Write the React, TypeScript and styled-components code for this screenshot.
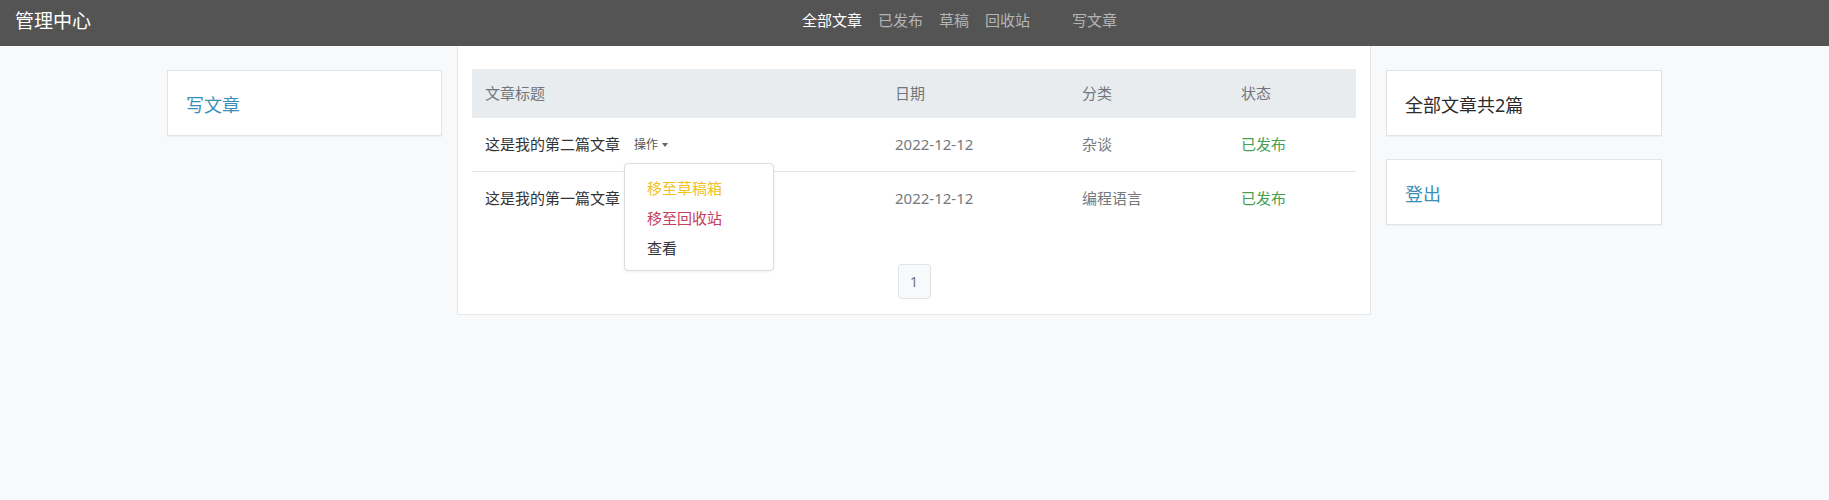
import React from "react";
import styled, { createGlobalStyle } from "styled-components";

const Global = createGlobalStyle`
  html, body { margin: 0; padding: 0; }
  body {
    background: #f8f9fa;
    font-family: "Noto Sans", "Noto Sans CJK SC", sans-serif;
    color: #212529;
  }
`;

const NavBar = styled.header`
  height: 46px;
  background: #545454;
  display: flex;
  align-items: center;
  padding-left: 15px;
  box-sizing: border-box;
`;

const Brand = styled.div`
  width: 779px;
  color: #fff;
  font-size: 19px;
  line-height: 26px;
  margin-top: -4px;
  flex-shrink: 0;
`;

const NavGroup = styled.nav<{ $offset?: number }>`
  display: flex;
  margin-left: ${(p) => p.$offset ?? 0}px;
  margin-top: -6px;
`;

const NavLink = styled.a<{ $active?: boolean }>`
  padding: 0 8px;
  font-size: 15px;
  line-height: 22px;
  color: ${(p) => (p.$active ? "#ffffff" : "#b4b4b4")};
  text-decoration: none;
`;

const Layout = styled.main`
  display: grid;
  grid-template-columns: 275px 914px 276px;
  column-gap: 15px;
  justify-content: center;
  align-items: start;
`;

const Side = styled.aside`
  padding-top: 24px;
  display: flex;
  flex-direction: column;
  gap: 23px;
`;

const SideCard = styled.div<{ $link?: boolean }>`
  background: #fff;
  border: 1px solid #e2e4e6;
  box-shadow: 0 1px 1px rgba(0, 0, 0, 0.04);
  height: 66px;
  box-sizing: border-box;
  display: flex;
  align-items: center;
  padding: 2px 18px 0;
  font-size: 18px;
  color: ${(p) => (p.$link ? "#3a8fb9" : "#2b2b2b")};
`;

const MainCard = styled.section`
  background: #fff;
  border: 1px solid #e5e7e9;
  border-top: none;
  padding: 23px 14px 15px;
  display: flex;
  flex-direction: column;
  align-items: center;
`;

const Table = styled.table`
  width: 100%;
  border-collapse: collapse;
  font-size: 15px;
  margin-bottom: 39px;
`;

const Th = styled.th`
  background: #e9ecef;
  color: #71767b;
  font-weight: 400;
  text-align: left;
  padding: 13px 13px;
  line-height: 23px;
`;

const Tr = styled.tr`
  & + & td {
    border-top: 1px solid #e3e5e7;
  }
`;

const Td = styled.td<{ $tone?: "title" | "muted" | "ok" }>`
  padding: 15px 13px 15px;
  line-height: 23px;
  color: ${(p) =>
    p.$tone === "ok" ? "#45a052" : p.$tone === "muted" ? "#74797e" : "#333333"};
  position: relative;
`;

const Toggle = styled.span`
  position: relative;
  display: inline-flex;
  align-items: center;
  gap: 4px;
  margin-left: 14px;
  font-size: 12px;
  color: #555;
  vertical-align: 1px;
`;

const Caret = styled.span`
  width: 0;
  height: 0;
  border-left: 3px solid transparent;
  border-right: 3px solid transparent;
  border-top: 4px solid #666;
`;

const Menu = styled.div`
  position: absolute;
  left: -10px;
  top: 30px;
  width: 150px;
  box-sizing: border-box;
  background: #fff;
  border: 1px solid #dcdcdc;
  border-radius: 4px;
  box-shadow: 0 1px 3px rgba(0, 0, 0, 0.06);
  padding: 9px 0 7px;
  z-index: 5;
`;

const MenuItem = styled.div<{ $color: string }>`
  padding: 0 22px;
  line-height: 30px;
  font-size: 15px;
  color: ${(p) => p.$color};
  white-space: nowrap;
`;

const PageBtn = styled.div`
  width: 33px;
  height: 35px;
  box-sizing: border-box;
  border: 1px solid #e2e4e6;
  border-radius: 3px;
  background: #f8f9fa;
  color: #6c757d;
  font-size: 14px;
  display: flex;
  align-items: center;
  justify-content: center;
`;

const rows = [
  { title: "这是我的第二篇文章", date: "2022-12-12", cat: "杂谈", status: "已发布", menu: true },
  { title: "这是我的第一篇文章", date: "2022-12-12", cat: "编程语言", status: "已发布", menu: false },
];

export default function App() {
  return (
    <>
      <Global />
      <NavBar>
        <Brand>管理中心</Brand>
        <NavGroup>
          <NavLink $active>全部文章</NavLink>
          <NavLink>已发布</NavLink>
          <NavLink>草稿</NavLink>
          <NavLink>回收站</NavLink>
        </NavGroup>
        <NavGroup $offset={26}>
          <NavLink>写文章</NavLink>
        </NavGroup>
      </NavBar>
      <Layout>
        <Side>
          <SideCard $link>写文章</SideCard>
        </Side>
        <MainCard>
          <Table>
            <colgroup>
              <col style={{ width: 410 }} />
              <col style={{ width: 187 }} />
              <col style={{ width: 159 }} />
              <col />
            </colgroup>
            <thead>
              <tr>
                <Th>文章标题</Th>
                <Th>日期</Th>
                <Th>分类</Th>
                <Th>状态</Th>
              </tr>
            </thead>
            <tbody>
              {rows.map((r) => (
                <Tr key={r.title}>
                  <Td $tone="title">
                    {r.title}
                    {r.menu && (
                      <Toggle>
                        操作
                        <Caret />
                        <Menu>
                          <MenuItem $color="#f1c21b">移至草稿箱</MenuItem>
                          <MenuItem $color="#c5405f">移至回收站</MenuItem>
                          <MenuItem $color="#333">查看</MenuItem>
                        </Menu>
                      </Toggle>
                    )}
                  </Td>
                  <Td $tone="muted">{r.date}</Td>
                  <Td $tone="muted">{r.cat}</Td>
                  <Td $tone="ok">{r.status}</Td>
                </Tr>
              ))}
            </tbody>
          </Table>
          <PageBtn>1</PageBtn>
        </MainCard>
        <Side>
          <SideCard>全部文章共2篇</SideCard>
          <SideCard $link>登出</SideCard>
        </Side>
      </Layout>
    </>
  );
}
